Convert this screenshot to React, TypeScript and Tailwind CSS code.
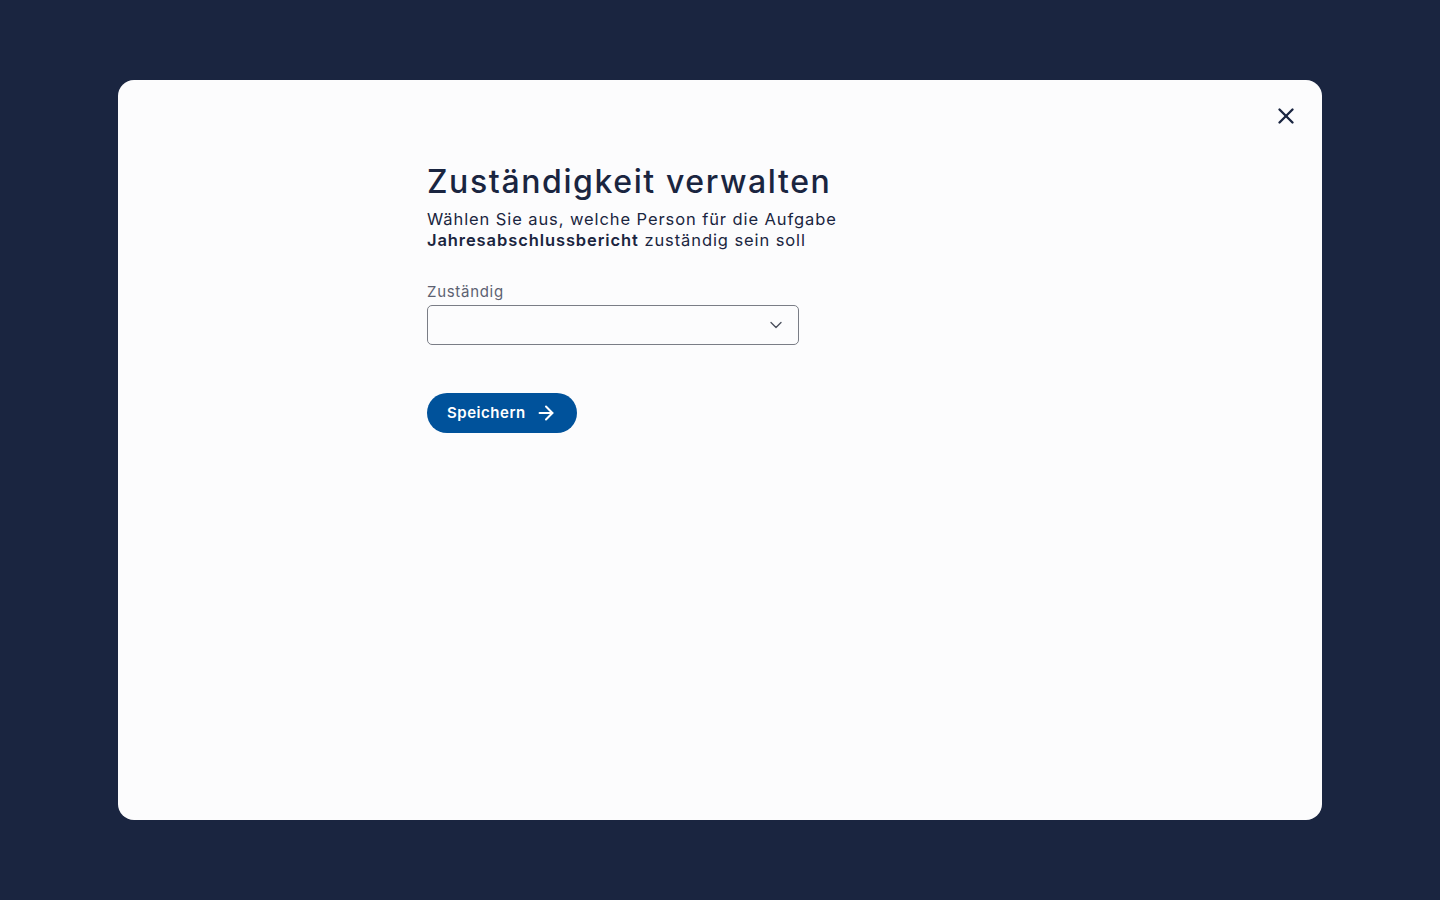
import { ChevronDown, ArrowRight, X } from 'lucide-react';

function App() {
  return (
    <div className="min-h-screen bg-[#1a2540] flex items-center justify-center font-['Inter',sans-serif]">
      <div className="relative w-[1204px] h-[740px] bg-[#fcfcfd] rounded-2xl">
        {/* Schließen */}
        <button className="absolute right-[23px] top-[23px] text-[#1a2540]">
          <X size={26} strokeWidth={2.2} />
        </button>

        <div className="pl-[309px] pt-[82px]">
          <h1 className="text-[32px] leading-[40px] font-medium text-[#1a2540] tracking-[0.05em]">
            Zuständigkeit verwalten
          </h1>
          <p className="mt-[7px] text-[16.5px] leading-[21px] text-[#1a2540] tracking-[0.055em]">
            Wählen Sie aus, welche Person für die Aufgabe
            <br />
            <span className="font-semibold">Jahresabschlussbericht</span> zuständig sein soll
          </p>

          <div className="mt-[31px]">
            <label className="block text-[15px] leading-[20px] text-[#5c6272] tracking-[0.047em]">Zuständig</label>
            <div className="mt-[3px] w-[372px] h-[40px] border border-[#7a7d86] rounded-[5px] flex items-center justify-end pr-[12px]">
              <ChevronDown size={20} className="text-[#4a4f5c]" strokeWidth={1.6} />
            </div>
          </div>

          <button className="mt-[48px] h-[40px] w-[150px] rounded-full bg-[#00529b] text-white flex items-center gap-[9px] pl-[20px]">
            <span className="text-[15px] font-semibold tracking-[0.035em]">Speichern</span>
            <ArrowRight size={22} strokeWidth={2.2} />
          </button>
        </div>
      </div>
    </div>
  );
}

export default App;
